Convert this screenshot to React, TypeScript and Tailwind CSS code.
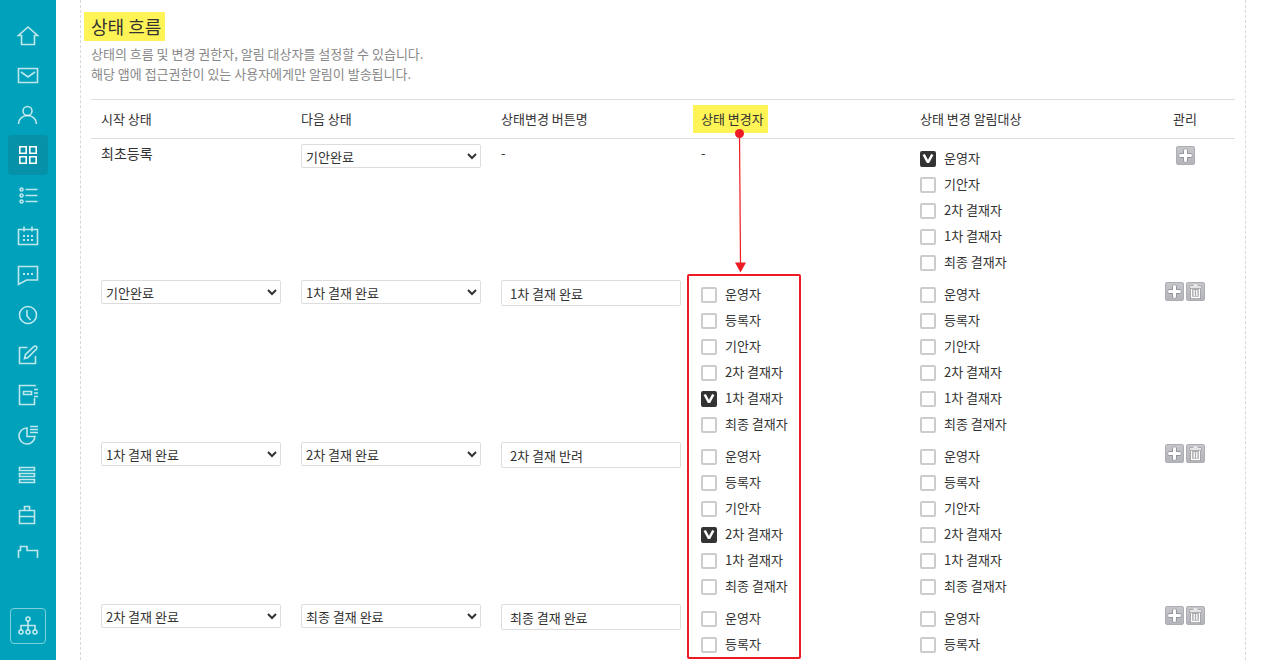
import type { ReactNode } from 'react'
import { clsx } from 'clsx'

const MENU: { label: string; active?: boolean; icon: ReactNode }[] = [
  { label: '홈', icon: <path d="M5.5 12.5h-3L12 4l9.500 8.500h-3v9h-13z" /> },
  { label: '메일', icon: <path d="M2.5 5.5h19v14h-19zM5 9l7 5 7-5" /> },
  {
    label: '주소록',
    icon: (
      <>
        <circle cx="11.5" cy="8" r="4.5" />
        <path d="M2.5 21c0-5 4-8.5 9-8.5s9 3.5 9 8.5" />
      </>
    ),
  },
  {
    label: '앱',
    active: true,
    icon: <path d="M3.8 3.8h6.4v6.4H3.8zM13.8 3.8h6.4v6.4h-6.4zM3.8 13.8h6.4v6.4H3.8zM13.8 13.8h6.4v6.4h-6.4z" />,
  },
  {
    label: '목록',
    icon: (
      <>
        <circle cx="5.5" cy="6.5" r="1.5" />
        <circle cx="5.5" cy="12.5" r="1.5" />
        <circle cx="5.5" cy="18.5" r="1.5" />
        <path d="M9.500 6.500h12M9.500 12.500h12M9.500 18.500h12" />
      </>
    ),
  },
  {
    label: '캘린더',
    icon: (
      <>
        <path d="M2.5 6.5h19v15h-19zM8 3.500v5M16 3.500v5" />
        <path strokeWidth="2" strokeDasharray="2 2" d="M7 13h10M7 17h10" />
      </>
    ),
  },
  {
    label: '게시판',
    icon: (
      <>
        <path d="M2.5 3.5h19v13.5h-11L2.5 21.5z" />
        <path strokeWidth="2" strokeDasharray="2 2" d="M7 11h10" />
      </>
    ),
  },
  {
    label: '근태',
    icon: (
      <>
        <circle cx="12" cy="12" r="8.5" />
        <path d="M11 7v6l3.5 4" />
      </>
    ),
  },
  { label: '작성', icon: <path d="M11.500 4.500h-8v16h16v-7.500M8.500 15.500l1-4 8.500-8q1.500-1 2.500 0t0 2.500l-8.500 8.500z" /> },
  { label: '보고', icon: <path d="M19 3.500v-1H3.500v19h15v-6.500M7.500 8.500h8v3h-8zM18 6.500h4M18 10h4M18 13.500h4" /> },
  { label: '설문', icon: <path d="M11 5A8 8 0 1 0 19 13.500h-8zM14 3.500h8M14 6.500h8M14 9.500h8" /> },
  { label: '자료실', icon: <path d="M3.500 4.500h15v3h-15zM3.500 10.500h15v3h-15zM3.500 16.500h15v3h-15z" /> },
  { label: '업무', icon: <path d="M3.500 7.500h15v13h-15zM8.500 7v-3.500h5V7M3.500 13.500h15" /> },
  { label: '문서함', icon: <path d="M2.500 20V7.500h2v-4h6.500v4h10.500V20z" /> },
]

const COLUMNS = ['시작 상태', '다음 상태', '상태변경 버튼명', '상태 변경자', '상태 변경 알림대상']

const STATES = ['기안완료', '1차 결재 완료', '2차 결재 완료', '최종 결재 완료']

const FIRST_ROLES = ['운영자', '기안자', '2차 결재자', '1차 결재자', '최종 결재자']
const ROLES = ['운영자', '등록자', '기안자', '2차 결재자', '1차 결재자', '최종 결재자']

const FLOWS = [
  { from: '기안완료', to: '1차 결재 완료', button: '1차 결재 완료', roles: ROLES, changer: '1차 결재자' },
  { from: '1차 결재 완료', to: '2차 결재 완료', button: '2차 결재 반려', roles: ROLES, changer: '2차 결재자' },
  { from: '2차 결재 완료', to: '최종 결재 완료', button: '최종 결재 완료', roles: ['운영자', '등록자'], changer: '' },
]

function Icon({ children }: { children: ReactNode }) {
  return (
    <svg viewBox="0 0 24 24" className="size-6 shrink-0" fill="none" stroke="currentColor" strokeWidth="1.6" aria-hidden="true">
      {children}
    </svg>
  )
}

function StateSelect({ label, value }: { label: string; value: string }) {
  return (
    <select
      aria-label={label}
      defaultValue={value}
      className="block h-6 w-[180px] rounded-xs border border-[#ddd] bg-white text-[13px] text-[#333]"
    >
      {STATES.map((s) => <option key={s}>{s}</option>)}
    </select>
  )
}

function RoleList({ roles, checked }: { roles: string[]; checked?: string }) {
  return (
    <ul className="pt-1.5">
      {roles.map((role) => (
        <li key={role} className="h-[26px]">
          <label className="inline-flex h-full items-center gap-2">
            <span className="relative mt-0.5 size-4">
              <input
                type="checkbox"
                defaultChecked={role === checked}
                className="peer block size-4 appearance-none rounded-xs border-2 border-[#ccc] bg-white checked:border-[#333] checked:bg-[#333]"
              />
              {/* check mark */}
              <svg viewBox="0 0 16 16" className="pointer-events-none absolute inset-0 hidden size-4 peer-checked:block" fill="none" stroke="#fff" strokeWidth="2.6">
                <path d="M3.700 3.500 8 11.500l4.300-8" strokeLinejoin="bevel" />
              </svg>
            </span>
            {role}
          </label>
        </li>
      ))}
    </ul>
  )
}

function ToolButton({ label, children }: { label: string; children: ReactNode }) {
  return (
    <button
      type="button"
      aria-label={label}
      className="size-[19px] rounded-xs border border-[#adaeb3] bg-linear-to-b from-[#c6c7cb] to-[#b4b5bb]"
    >
      <svg viewBox="0 0 17 17" className="block size-[17px]" fill="none" stroke="#fff">
        {children}
      </svg>
    </button>
  )
}

function AddButton() {
  return (
    <ToolButton label="추가">
      <path stroke="#96979d" strokeWidth="5" strokeLinecap="round" d="M8.500 4v9M4 8.500h9" />
      <path strokeWidth="3" strokeLinecap="round" d="M8.500 3.500v10M3.500 8.500h10" />
    </ToolButton>
  )
}

function DeleteButton() {
  return (
    <ToolButton label="삭제">
      <path stroke="#96979d" strokeWidth="3" d="M2.500 4h12M4.500 6v8.500h8V6" />
      <path fill="#a9aab0" strokeWidth="1.300" d="M4.500 6v8.500h8V6" />
      <path strokeWidth="1.300" d="M3 4h11M6.500 2.200h4M7.200 7v6M9.800 7v6" />
    </ToolButton>
  )
}

export default function App() {
  return (
    <div className="flex h-screen overflow-hidden bg-white font-['Noto_Sans_CJK_KR',sans-serif] text-[13px] leading-5 text-[#333]">
      {/* Sidebar */}
      <aside className="flex w-14 shrink-0 flex-col items-center bg-[#00a1ba] text-white/75">
        <nav className="min-h-0 flex-1 overflow-hidden pt-[15px]">
          {MENU.map(({ label, active, icon }) => (
            <a
              key={label}
              href="#"
              aria-label={label}
              className={clsx('flex size-10 items-center justify-center rounded', active && 'bg-[#0691a9] text-white')}
            >
              <Icon>{icon}</Icon>
            </a>
          ))}
        </nav>
        <button type="button" aria-label="조직도" className="mt-[50px] mb-4 flex size-9 items-center justify-center rounded border border-white/50">
          <Icon>
            <circle cx="12" cy="5" r="2" />
            <circle cx="5" cy="18" r="2" />
            <circle cx="12" cy="18" r="2" />
            <circle cx="19" cy="18" r="2" />
            <path d="M12 7v9M5 16v-4.500h14V16" />
          </Icon>
        </button>
      </aside>

      {/* Content */}
      <main className="relative mr-[23px] ml-6 flex-1 border-x border-dashed border-[#d8d8d8] px-2.5 pt-3">
        <h2 className="-ml-[7px] h-[29px] w-fit bg-[#fff455] pr-1 pl-[7px] text-[18px] leading-[29px]">상태 흐름</h2>
        <p className="mt-[3px] text-[#888]">
          상태의 흐름 및 변경 권한자, 알림 대상자를 설정할 수 있습니다.
          <br />
          해당 앱에 접근권한이 있는 사용자에게만 알림이 발송됩니다.
        </p>

        <table className="mt-[15px] w-full table-fixed border-separate border-spacing-0">
          <colgroup>
            <col className="w-[200px]" />
            <col className="w-[200px]" />
            <col className="w-[200px]" />
            <col className="w-[219px]" />
            <col />
            <col className="w-[100px]" />
          </colgroup>
          <thead>
            <tr className="h-10 text-left *:border-y *:border-[#ddd] *:font-normal">
              {COLUMNS.map((name) => (
                <th key={name} className="px-2.5 whitespace-nowrap">
                  {name === '상태 변경자' ? (
                    <span className="-ml-2 inline-block bg-[#fff455] py-1 pr-1 pl-2">{name}</span>
                  ) : name}
                </th>
              ))}
              <th className="text-center">관리</th>
            </tr>
          </thead>
          <tbody className="align-top">
            <tr>
              <td className="px-2.5 pt-1 text-[14px]">최초등록</td>
              <td className="px-2.5 pt-[5px]"><StateSelect label="다음 상태" value="기안완료" /></td>
              <td className="px-2.5 pt-1">-</td>
              <td className="px-2.5 pt-1">-</td>
              <td className="px-2.5"><RoleList roles={FIRST_ROLES} checked="운영자" /></td>
              <td className="pt-[7px]">
                <div className="flex justify-center"><AddButton /></div>
              </td>
            </tr>
            {FLOWS.map(({ from, to, button, roles, changer }) => (
              <tr key={from}>
                <td className="px-2.5 pt-[5px]"><StateSelect label="시작 상태" value={from} /></td>
                <td className="px-2.5 pt-[5px]"><StateSelect label="다음 상태" value={to} /></td>
                <td className="px-2.5 pt-[5px]">
                  <input
                    type="text"
                    aria-label="상태변경 버튼명"
                    defaultValue={button}
                    className="block h-[26px] w-[180px] rounded-xs border border-[#ddd] px-2"
                  />
                </td>
                <td className="px-2.5"><RoleList roles={roles} checked={changer} /></td>
                <td className="px-2.5"><RoleList roles={roles} /></td>
                <td className="pt-[7px]">
                  <div className="flex justify-center gap-0.5">
                    <AddButton />
                    <DeleteButton />
                  </div>
                </td>
              </tr>
            ))}
          </tbody>
        </table>

        {/* callout: arrow from the header down to the framed column */}
        <svg viewBox="0 0 12 144" className="pointer-events-none absolute top-[129px] left-[653px] h-36 w-3" fill="#ed1c24" aria-hidden="true">
          <circle cx="5.500" cy="4.500" r="4.500" />
          <path d="M5.500 4 6.500 134" stroke="#ed1c24" strokeWidth="1.200" />
          <path d="M1 133.500h11L6.500 143.500z" />
        </svg>
        <div className="pointer-events-none absolute top-[274px] bottom-px left-[606px] w-[114px] rounded-xs border-2 border-[#ed1c24]" />
      </main>
    </div>
  )
}
